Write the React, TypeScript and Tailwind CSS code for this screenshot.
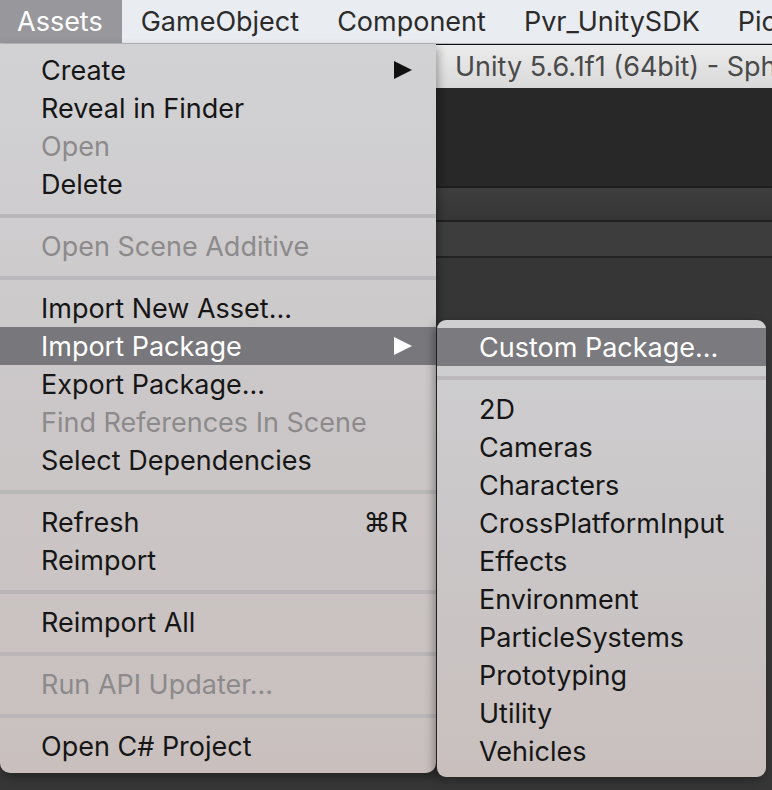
import React from 'react';

type Item =
  | { kind: 'sep' }
  | { kind: 'item'; label: string; disabled?: boolean; sub?: boolean; active?: boolean; shortcut?: string };

const mainItems: Item[] = [
  { kind: 'item', label: 'Create', sub: true },
  { kind: 'item', label: 'Reveal in Finder' },
  { kind: 'item', label: 'Open', disabled: true },
  { kind: 'item', label: 'Delete' },
  { kind: 'sep' },
  { kind: 'item', label: 'Open Scene Additive', disabled: true },
  { kind: 'sep' },
  { kind: 'item', label: 'Import New Asset...' },
  { kind: 'item', label: 'Import Package', sub: true, active: true },
  { kind: 'item', label: 'Export Package...' },
  { kind: 'item', label: 'Find References In Scene', disabled: true },
  { kind: 'item', label: 'Select Dependencies' },
  { kind: 'sep' },
  { kind: 'item', label: 'Refresh', shortcut: '⌘R' },
  { kind: 'item', label: 'Reimport' },
  { kind: 'sep' },
  { kind: 'item', label: 'Reimport All' },
  { kind: 'sep' },
  { kind: 'item', label: 'Run API Updater...', disabled: true },
  { kind: 'sep' },
  { kind: 'item', label: 'Open C# Project' },
];

const packages = [
  '2D',
  'Cameras',
  'Characters',
  'CrossPlatformInput',
  'Effects',
  'Environment',
  'ParticleSystems',
  'Prototyping',
  'Utility',
  'Vehicles',
];

const Arrow: React.FC<{ white?: boolean }> = ({ white }) => (
  <svg width="18" height="18" viewBox="0 0 18 18">
    <polygon points="0,0 18,9 0,18" fill={white ? '#ffffff' : '#111111'} />
  </svg>
);

const Separator: React.FC = () => (
  <div className="h-[24px] pt-[11px]">
    <div className="h-[4px] bg-[#b5b3b5]/80"></div>
  </div>
);

const MenuRow: React.FC<{ item: Extract<Item, { kind: 'item' }> }> = ({ item }) => {
  const color = item.active ? 'text-white' : item.disabled ? 'text-[#8c8a8b]' : 'text-[#161616]';
  return (
    <div
      className={`h-[38px] flex items-center justify-between pl-[41px] pr-[24px] ${
        item.active ? 'bg-[#78777c]' : ''
      } ${color}`}
    >
      <span className="whitespace-nowrap">{item.label}</span>
      {item.sub && <Arrow white={item.active} />}
      {item.shortcut && <span className="pr-[4px]">{item.shortcut}</span>}
    </div>
  );
};

export default function App() {
  return (
    <div
      className="relative w-[772px] h-[790px] overflow-hidden bg-[#363636] text-[27px] leading-none"
      style={{ fontFamily: 'Inter, "DejaVu Sans", sans-serif' }}
    >
      {/* macOS menu bar */}
      <div className="h-[44px] flex items-stretch bg-[#e9ecf1] border-b border-[#b8babd] text-[#2b2b2b] whitespace-nowrap overflow-hidden">
        <div className="flex items-center pl-[17px] pr-[19px] bg-[#98979c] text-white">Assets</div>
        <div className="flex items-center px-[19px]">GameObject</div>
        <div className="flex items-center px-[19px]">Component</div>
        <div className="flex items-center px-[19px]">Pvr_UnitySDK</div>
        <div className="flex items-center px-[19px]">PicoVR</div>
      </div>

      {/* Unity window behind */}
      <div className="border-t border-[#111]">
        <div className="h-[43px] flex items-center pl-[455px] bg-gradient-to-b from-[#ececec] to-[#d9d9d9] text-[#4a4a4a] whitespace-nowrap overflow-hidden">
          Unity 5.6.1f1 (64bit) - SphereScene.unity - PicoVR - PC, Mac &amp; Linux Standalone
        </div>
        <div className="h-[98px] bg-[#282828]"></div>
        <div className="h-[2px] bg-[#1e1e1e]"></div>
        <div className="h-[32px] bg-gradient-to-b from-[#3e3e3e] to-[#363636]"></div>
        <div className="h-[2px] bg-[#202020]"></div>
        <div className="h-[34px] bg-[#3d3d3d]"></div>
        <div className="h-[2px] bg-[#222]"></div>
        <div className="h-[530px] bg-[#363636]"></div>
      </div>

      {/* Assets menu */}
      <div className="absolute left-0 top-[44px] w-[436px] pt-[7px] pb-[8px] rounded-b-[10px] bg-gradient-to-b from-[#d2d2d4] via-[#cbc7c8] to-[#c9c0be] shadow-[2px_4px_10px_rgba(0,0,0,0.35)]">
        {mainItems.map((it, i) =>
          it.kind === 'sep' ? <Separator key={i} /> : <MenuRow key={i} item={it} />
        )}
      </div>

      {/* Import Package submenu */}
      <div className="absolute left-[437px] top-[320px] w-[329px] pt-[8px] pb-[7px] rounded-[9px] bg-gradient-to-b from-[#cfcfd1] via-[#cac6c7] to-[#c9c0be] shadow-[-3px_3px_10px_rgba(0,0,0,0.35)]">
        <div className="h-[38px] flex items-center pl-[42px] bg-[#7b7a7f] text-white whitespace-nowrap">
          Custom Package...
        </div>
        <div className="h-[24px] pt-[10px]">
          <div className="h-[4px] bg-[#b5b3b5]/80"></div>
        </div>
        {packages.map((p) => (
          <div key={p} className="h-[38px] flex items-center pl-[42px] text-[#161616] whitespace-nowrap">
            {p}
          </div>
        ))}
      </div>
    </div>
  );
}
